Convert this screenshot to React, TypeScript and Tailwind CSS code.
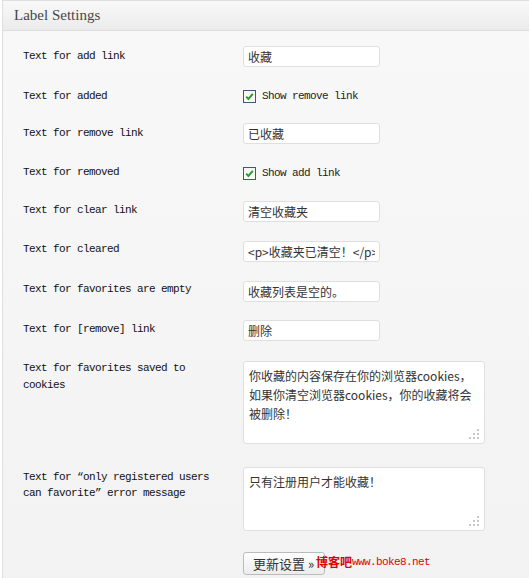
import React from 'react';

const label = "font-['Liberation_Mono',monospace] text-[11px] tracking-[-0.6px] text-[#111] w-[200px] mr-[20px] shrink-0";
const cjk = "font-['Noto_Sans_CJK_SC',sans-serif]";

function TextInput({ value }: { value: string }) {
  return (
    <input
      readOnly
      defaultValue={value}
      className={`${cjk} w-[137px] h-[21px] border border-[#dfdfdf] rounded-[3px] bg-white px-[4px] text-[12px] text-[#333] outline-none`}
    />
  );
}

function Check({ text }: { text: string }) {
  return (
    <div className="flex items-center gap-[6px]">
      <span className="w-[13px] h-[13px] border border-[#3f5a76] bg-gradient-to-b from-[#f4f4f4] to-white flex items-center justify-center">
        <svg width="11" height="11" viewBox="0 0 11 11">
          <path d="M2.2 5.6 L4.4 7.9 L8.8 2.8" fill="none" stroke="#25a02a" strokeWidth="2" />
        </svg>
      </span>
      <span className="font-['Liberation_Mono',monospace] text-[11px] tracking-[-0.6px] text-[#222] leading-[13px]">{text}</span>
    </div>
  );
}

function Grip() {
  // little resize dots in the corner
  return (
    <svg className="absolute right-[5px] bottom-[4px]" width="11" height="11" viewBox="0 0 11 11">
      <rect x="8" y="0" width="2" height="2" fill="#c8c8c8" />
      <rect x="4" y="4" width="2" height="2" fill="#c8c8c8" />
      <rect x="8" y="4" width="2" height="2" fill="#c8c8c8" />
      <rect x="0" y="8" width="2" height="2" fill="#c8c8c8" />
      <rect x="4" y="8" width="2" height="2" fill="#c8c8c8" />
      <rect x="8" y="8" width="2" height="2" fill="#c8c8c8" />
    </svg>
  );
}

function Area({ value, h }: { value: string; h: string }) {
  return (
    <div className="relative self-start">
      <textarea
        readOnly
        defaultValue={value}
        className={`${cjk} ${h} block w-[242px] border border-[#dfdfdf] rounded-[3px] bg-white pl-[5px] pr-[9px] pt-[4px] text-[12px] leading-[19px] text-[#333] outline-none resize-none overflow-hidden`}
      />
      <Grip />
    </div>
  );
}

export default function App() {
  return (
    <div className="w-[529px] h-[578px] overflow-hidden bg-white">
      <div className="ml-[2px] h-full border-l border-t border-[#dfdfdf]">
        {/* Header */}
        <div className="h-[30px] border-b border-[#dcdcdc] bg-gradient-to-b from-[#f9f9f9] to-[#ebebeb] pl-[11px] flex items-center">
          <h3 className="font-['Liberation_Serif',serif] text-[15px] text-[#464646] leading-none">Label Settings</h3>
        </div>

        {/* Form */}
        <div className="h-full bg-gradient-to-b from-[#f8f8f8] to-[#f2f2f2] pt-[15px] pl-[20px]">
          <div className="flex items-start h-[42px]">
            <div className={`${label} leading-[16px] mt-[2px]`}>Text for add link</div>
            <TextInput value="收藏" />
          </div>
          <div className="flex items-start h-[35px]">
            <div className={`${label} leading-[16px]`}>Text for added</div>
            <div className="mt-[2px]"><Check text="Show remove link" /></div>
          </div>
          <div className="flex items-start h-[41px]">
            <div className={`${label} leading-[16px] mt-[2px]`}>Text for remove link</div>
            <TextInput value="已收藏" />
          </div>
          <div className="flex items-start h-[37px]">
            <div className={`${label} leading-[16px]`}>Text for removed</div>
            <div className="mt-[3px]"><Check text="Show add link" /></div>
          </div>
          <div className="flex items-start h-[40px]">
            <div className={`${label} leading-[16px] mt-[1px]`}>Text for clear link</div>
            <TextInput value="清空收藏夹" />
          </div>
          <div className="flex items-start h-[40px]">
            <div className={`${label} leading-[16px]`}>Text for cleared</div>
            <TextInput value="<p>收藏夹已清空！</p>" />
          </div>
          <div className="flex items-start h-[39px]">
            <div className={`${label} leading-[16px]`}>Text for favorites are empty</div>
            <TextInput value="收藏列表是空的。" />
          </div>
          <div className="flex items-start h-[40px]">
            <div className={`${label} leading-[16px] mt-[1px]`}>Text for [remove] link</div>
            <TextInput value="删除" />
          </div>
          <div className="flex items-start h-[107px]">
            <div className={`${label} leading-[17px]`}>Text for favorites saved to cookies</div>
            <div className="mt-[1px]">
              <Area h="h-[83px]" value="你收藏的内容保存在你的浏览器cookies，如果你清空浏览器cookies，你的收藏将会被删除！" />
            </div>
          </div>
          <div className="flex items-start h-[85px]">
            <div className={`${label} leading-[16px] mt-[2px]`}>Text for “only registered users can favorite” error message</div>
            <Area h="h-[64px]" value="只有注册用户才能收藏！" />
          </div>
          <div className="flex items-center pl-[220px]">
            <button className={`${cjk} w-[82px] h-[23px] border border-[#bbb] rounded-[3px] bg-gradient-to-b from-white to-[#ececec] text-left pl-[9px] text-[13px] text-[#333] leading-none`}>
              更新设置 »
            </button>
            <span className="relative -ml-[9px] -mt-[3px] text-[#e00000] flex items-center">
              <span className={`${cjk} text-[12px] font-bold`}>博客吧</span>
              <span className="font-['Liberation_Mono',monospace] text-[11px] tracking-[-0.6px]">www.boke8.net</span>
            </span>
          </div>
        </div>
      </div>
    </div>
  );
}
